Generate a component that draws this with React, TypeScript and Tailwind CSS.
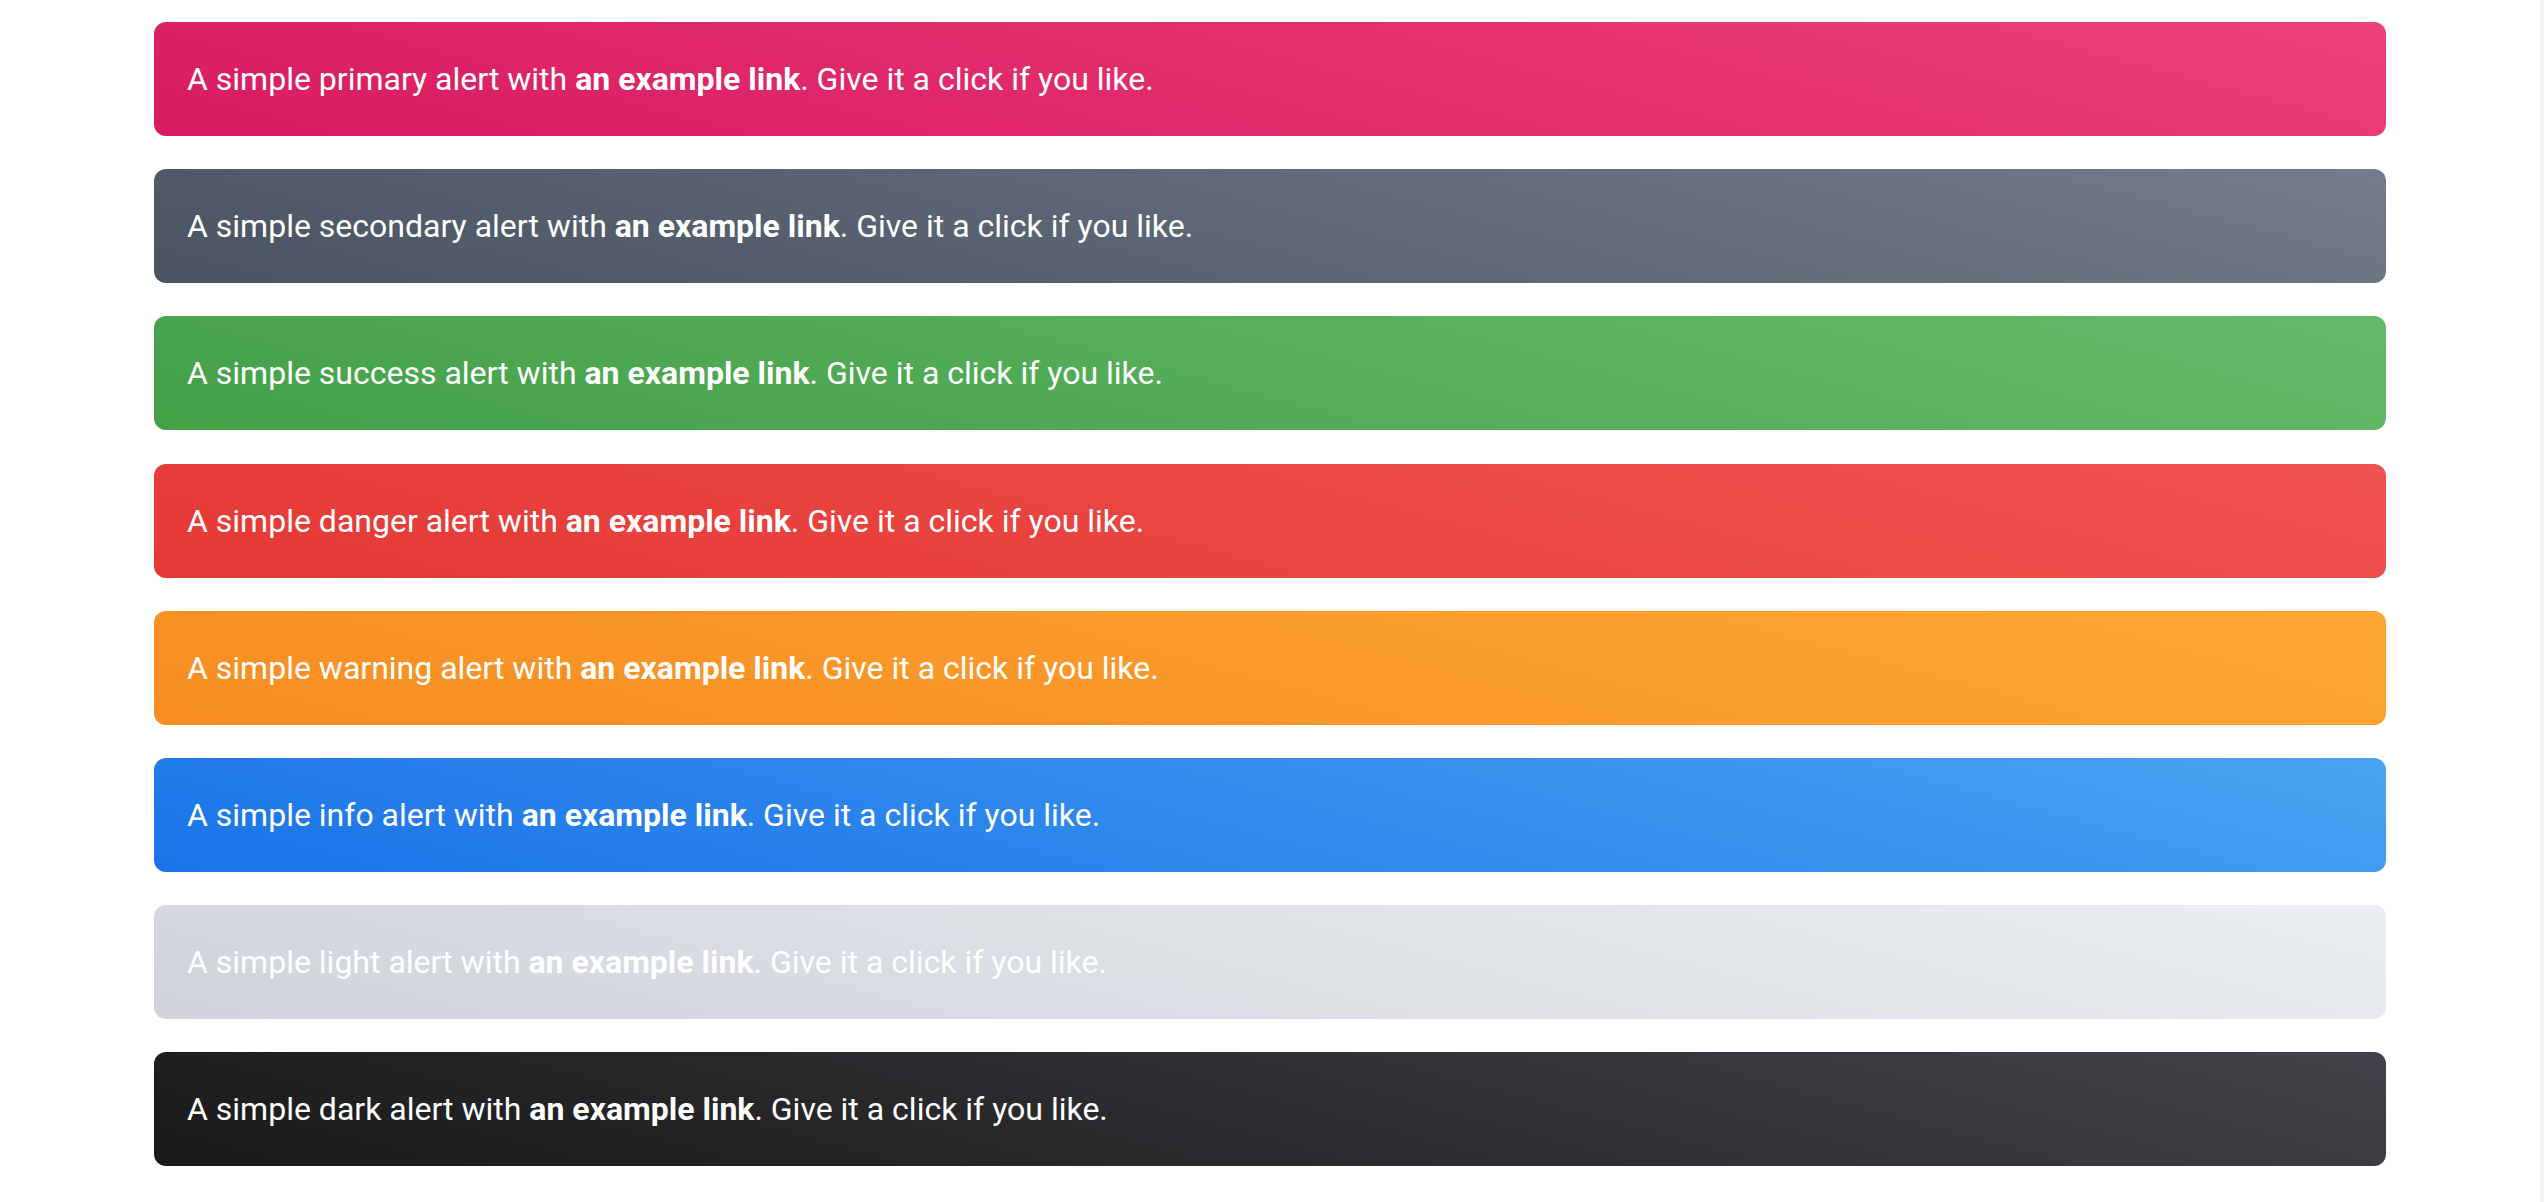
import * as React from "react";

const alerts = [
  { name: "primary", bg: "bg-[linear-gradient(195deg,#EC407A,#D81B60)]" },
  { name: "secondary", bg: "bg-[linear-gradient(195deg,#747b8a,#495361)]" },
  { name: "success", bg: "bg-[linear-gradient(195deg,#66BB6A,#43A047)]" },
  { name: "danger", bg: "bg-[linear-gradient(195deg,#EF5350,#E53935)]" },
  { name: "warning", bg: "bg-[linear-gradient(195deg,#FCA732,#F78D22)]" },
  { name: "info", bg: "bg-[linear-gradient(195deg,#49a3f1,#1A73E8)]" },
  { name: "light", bg: "bg-[linear-gradient(195deg,#EBEFF4,#CED4DA)]" },
  { name: "dark", bg: "bg-[linear-gradient(195deg,#42424a,#191919)]" },
];

export default function App() {
  return (
    <div className="flex min-h-[1202px] bg-white font-['Roboto',sans-serif]">
      <div className="flex-1 pt-[22px]">
        <div className="mx-auto flex w-[2232px] flex-col gap-[33.2px]">
          {alerts.map((a) => (
            <div
              key={a.name}
              className={`flex h-[114px] items-center rounded-[12px] px-[33px] text-[32px] text-white ${a.bg}`}
            >
              <span>
                A simple {a.name} alert with{" "}
                <a href="#" className="font-bold text-white">
                  an example link
                </a>
                . Give it a click if you like.
              </span>
            </div>
          ))}
        </div>
      </div>
      <div className="w-[4px] bg-[#f3f3f3]" />
    </div>
  );
}
